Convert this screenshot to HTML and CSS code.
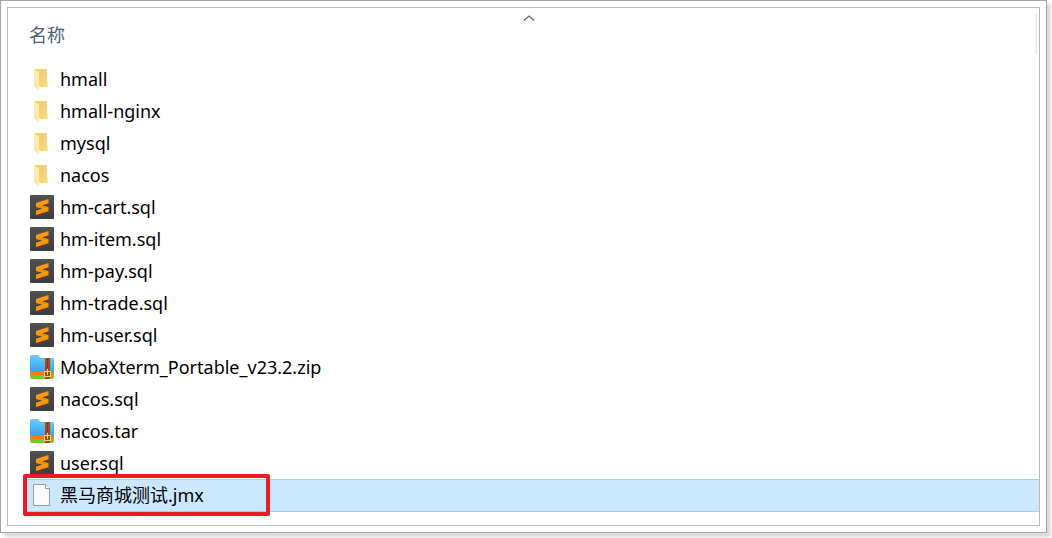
FILE: index.html
```
<!DOCTYPE html>
<html lang="zh-CN">
<head>
<meta charset="utf-8">
<title>名称</title>
<link rel="stylesheet" href="styles.css">
</head>
<body>
<svg class="defs" aria-hidden="true">
  <defs>
    <linearGradient id="gold" x1="0" y1="0" x2="1" y2="1"><stop offset="0" stop-color="#f0cc6c"/><stop offset="1" stop-color="#fbdb82"/></linearGradient>
    <linearGradient id="flap" x1="0" y1="0" x2="0" y2="1"><stop offset="0" stop-color="#fff0b8"/><stop offset="1" stop-color="#ffe596"/></linearGradient>
    <linearGradient id="slate" x1="0" y1="0" x2="0" y2="1"><stop offset="0" stop-color="#525252"/><stop offset="1" stop-color="#3d3d3d"/></linearGradient>
    <linearGradient id="sky" x1="0" y1="0" x2="0" y2="1"><stop offset="0" stop-color="#68ccfb"/><stop offset="1" stop-color="#35a2ee"/></linearGradient>
  </defs>
  <symbol id="folder" viewBox="0 0 24 24">
    <path d="M5 2h12v12l.8.8V20H5z" fill="url(#gold)"/>
    <path d="M4 2l5 3v18l-5-3z" fill="url(#flap)"/>
  </symbol>
  <symbol id="sublime" viewBox="0 0 24 24">
    <rect width="24" height="24" rx="1" fill="url(#slate)"/>
    <path d="M18.500 4v4.200L12 10.500l6.500 1.700v4L6 20v-4.200l6.500-2.300L6 12V8z" fill="#ff9800"/>
    <path d="M6 12l6.500 1.500 5-1.600-5.500-1.400z" fill="#f08b00"/>
  </symbol>
  <symbol id="archive" viewBox="0 0 24 24">
    <path d="M0 2q0-2 2-2h6l3 3h11q2 0 2 2v13H0z" fill="url(#sky)"/>
    <path d="M0 17h24v4H0z" fill="#ff7d0c"/>
    <path d="M0 20q12 1 24-1v3q0 2-2 2H2q-2 0-2-2z" fill="#74c92b"/>
    <path d="M15 3h5v21h-5z" fill="#a44d18"/>
    <path d="M17.500 4v11" stroke="#5a2708" stroke-width="1" stroke-dasharray="1 1"/>
    <path d="M14.500 16.500h6v5h-6zM17.500 14v6" fill="none" stroke="#f4cf90" stroke-width="1"/>
  </symbol>
  <symbol id="page" viewBox="0 0 24 24">
    <path d="M3.500 1.500h12l4 4v17h-16z" fill="#f9f9f9" stroke="#9b9b9b"/>
    <path d="M15.500 1.500v4h4" fill="#fff" stroke="#9b9b9b"/>
  </symbol>
</svg>
<main class="frame">
  <div class="panel">
    <table class="files">
      <thead>
        <tr><th class="column" scope="col">
          <button class="sort" type="button">名称
            <svg class="caret" viewBox="0 0 12 6" aria-hidden="true"><path d="M1 5.500l5-4.500 5 4.500" fill="none" stroke="#606060" stroke-width="1.200"/></svg>
          </button>
        </th></tr>
      </thead>
      <tbody>
        <tr><td><div class="file"><svg class="icon"><use href="#folder"/></svg>hmall</div></td></tr>
        <tr><td><div class="file"><svg class="icon"><use href="#folder"/></svg>hmall-nginx</div></td></tr>
        <tr><td><div class="file"><svg class="icon"><use href="#folder"/></svg>mysql</div></td></tr>
        <tr><td><div class="file"><svg class="icon"><use href="#folder"/></svg>nacos</div></td></tr>
        <tr><td><div class="file"><svg class="icon"><use href="#sublime"/></svg>hm-cart.sql</div></td></tr>
        <tr><td><div class="file"><svg class="icon"><use href="#sublime"/></svg>hm-item.sql</div></td></tr>
        <tr><td><div class="file"><svg class="icon"><use href="#sublime"/></svg>hm-pay.sql</div></td></tr>
        <tr><td><div class="file"><svg class="icon"><use href="#sublime"/></svg>hm-trade.sql</div></td></tr>
        <tr><td><div class="file"><svg class="icon"><use href="#sublime"/></svg>hm-user.sql</div></td></tr>
        <tr><td><div class="file"><svg class="icon"><use href="#archive"/></svg>MobaXterm_Portable_v23.2.zip</div></td></tr>
        <tr><td><div class="file"><svg class="icon"><use href="#sublime"/></svg>nacos.sql</div></td></tr>
        <tr><td><div class="file"><svg class="icon"><use href="#archive"/></svg>nacos.tar</div></td></tr>
        <tr><td><div class="file"><svg class="icon"><use href="#sublime"/></svg>user.sql</div></td></tr>
        <tr><td><div class="file selected"><svg class="icon"><use href="#page"/></svg>黑马商城测试.jmx<span class="marker"></span></div></td></tr>
      </tbody>
    </table>
  </div>
</main>
</body>
</html>
```
FILE: styles.css
```
* {
  box-sizing: border-box;
}

body {
  display: flex;
  min-height: 100vh;
  margin: 0;
  padding: 0 5px 5px 0;
  background: #fff;
  color: #000;
  font-family: "Noto Sans", "Noto Sans CJK SC", sans-serif;
  font-size: 18px;
  line-height: 24px;
}

.defs {
  position: absolute;
  width: 0;
  height: 0;
}

.frame {
  display: flex;
  flex: 1;
  padding: 6px;
  border: 1px solid #a5a5a5;
  background: #fff;
  box-shadow: 4px 4px 3px #dcdcdc;
}

.panel {
  flex: 1;
  padding-left: 16px;
  border: 1px solid #b9b9b9;
}

.files {
  width: 100%;
  border-collapse: collapse;
}

.files th,
.files td {
  padding: 0;
  font-weight: 400;
}

.column {
  position: relative;
}

.column::after {
  position: absolute;
  top: 6px;
  right: 2px;
  width: 1px;
  height: 40px;
  background: #e2e2e2;
  content: "";
}

.sort {
  position: relative;
  display: block;
  width: calc(100% - 6px);
  height: 55px;
  padding: 0 5px 2px;
  border: 0;
  background: none;
  color: #4c607a;
  font: inherit;
  text-align: left;
}

.caret {
  position: absolute;
  top: 7px;
  left: calc(50% - 6px);
  width: 12px;
  height: 6px;
}

.file {
  position: relative;
  display: flex;
  align-items: center;
  gap: 6px;
  height: 32px;
  padding-left: 6px;
}

.icon {
  flex: none;
  width: 24px;
  height: 24px;
}

.selected {
  height: 33px;
  padding-bottom: 1px;
  background: #cce8ff;
  box-shadow: inset 0 1px #99d1ff, inset 0 -1px #99d1ff;
}

.marker {
  position: absolute;
  top: -5px;
  left: -1px;
  width: 247px;
  height: 42px;
  border: 4px solid #ed1c24;
  border-radius: 2px;
}
```
